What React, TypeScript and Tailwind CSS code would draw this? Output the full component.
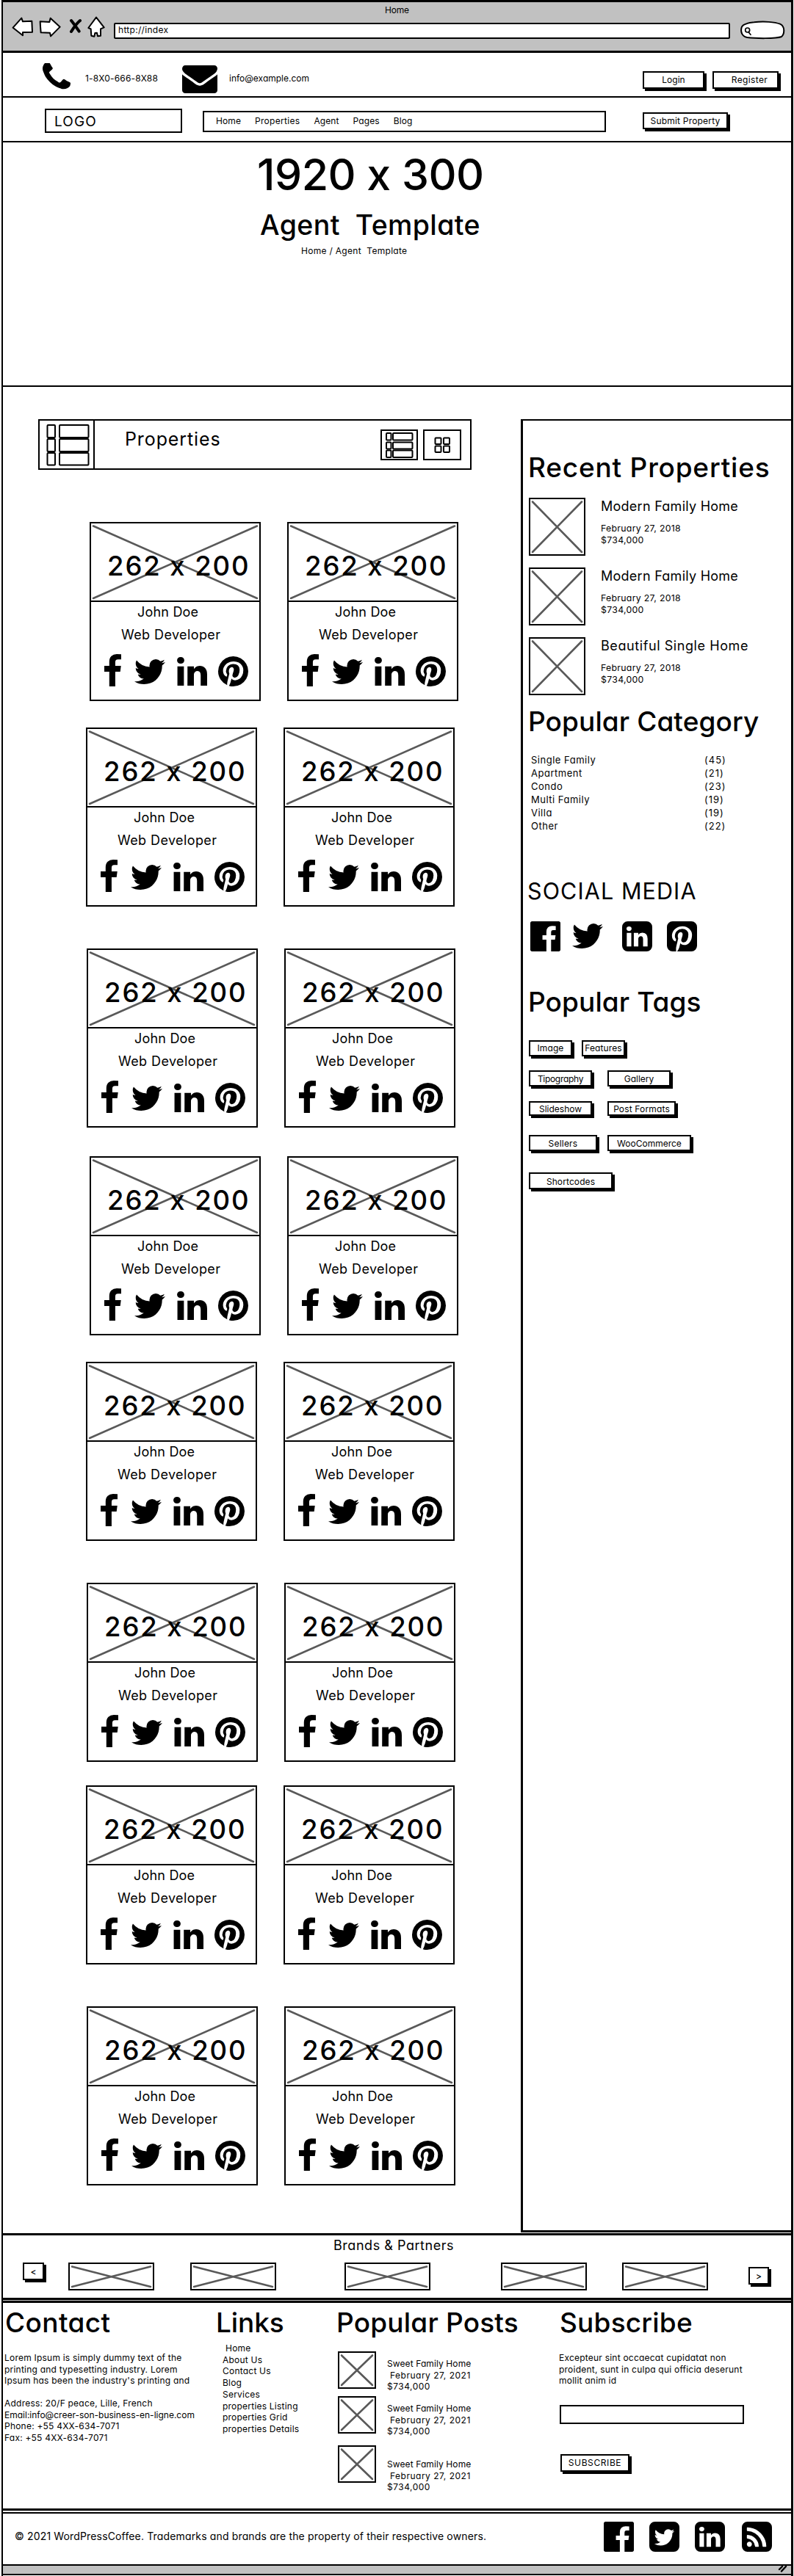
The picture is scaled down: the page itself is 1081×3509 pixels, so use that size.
import type { ReactNode } from "react";

/* ---------- icon outlines (1792-unit grid) ---------- */

const ICONS = {
  facebook: {
    box: "479 0 864 1664",
    d: "M1343 12v264h-157q-86 0-116 36t-30 108v189h293l-39 296h-254v759h-306v-759h-255v-296h255v-218q0-186 104-288.5t277-102.5q147 0 228 12z",
  },
  twitter: {
    box: "108 256 1576 1280",
    d: "M1684 408q-67 98-162 167 1 14 1 42 0 130-38 259.5t-115.5 248.5-184.5 210.5-258 146-323 54.5q-271 0-496-145 35 4 78 4 225 0 401-138-105-2-188-64.5t-114-159.5q33 5 61 5 43 0 85-11-112-23-185.5-111.5t-73.5-205.5v-4q68 38 146 41-66-44-105-115t-39-154q0-88 44-163 121 149 294.5 238.5t371.5 99.5q-8-38-8-74 0-134 94.5-228.5t228.5-94.5q140 0 236 102 109-21 205-78-37 115-142 178 93-10 186-50z",
  },
  linkedin: {
    box: "126 148 1538 1468",
    d: "M477 625v991h-330v-991h330zm21-306q1 73-50.5 122t-135.5 49h-2q-82 0-132-49t-50-122q0-74 51.5-122.5t134.5-48.5 133 48.5 51 122.5zm1166 729v568h-329v-530q0-105-40.5-164.5t-126.5-59.5q-63 0-105.5 34.5t-63.5 85.5q-11 30-11 81v553h-329q2-399 2-647t-1-296l-1-48h329v144h-2q20-32 41-56t56.5-52 87-43.5 114.5-15.5q171 0 275 113.5t104 332.5z",
  },
  pinterest: {
    box: "128 128 1536 1536",
    d: "M1664 896q0 209-103 385.5t-279.5 279.5-385.5 103q-111 0-218-32 59-93 78-164 9-34 54-211 20 39 73 67.5t114 28.5q121 0 216-68.5t147-188.5 52-270q0-114-59.5-214t-172.5-163-255-63q-105 0-196 29t-154.5 77-109 110.5-67 129.5-21.5 134q0 104 40 183t117 111q30 12 38-20 2-7 8-31t8-30q6-23-11-43-51-61-51-151 0-151 104.5-259.5t273.5-108.5q151 0 235.5 82t84.5 213q0 170-68.5 289t-175.5 119q-61 0-98-43.5t-23-104.5q8-35 26.5-93.5t30-103 11.5-75.5q0-50-27-83t-77-33q-62 0-105 57t-43 142q0 73 25 122l-99 418q-17 70-13 177-206-91-333-281t-127-423q0-209 103-385.5t279.5-279.5 385.5-103 385.5 103 279.5 279.5 103 385.5z",
  },
  facebookBox: {
    box: "128 128 1536 1536",
    d: "M1579 128q35 0 60 25t25 60v1366q0 35-25 60t-60 25h-391v-595h199l30-232h-229v-148q0-56 23.5-84t91.5-28l122-1v-207q-63-9-178-9-136 0-217.5 80t-81.5 226v171h-200v232h200v595h-735q-35 0-60-25t-25-60v-1366q0-35 25-60t60-25h1366z",
  },
  twitterBox: {
    box: "128 128 1536 1536",
    d: "M1408 610q-56 25-121 34 68-40 93-117-65 38-134 51-61-66-153-66-87 0-148.5 61.5t-61.5 148.5q0 29 5 48-129-7-242-65t-192-155q-29 50-29 106 0 114 91 175-47-1-100-26v2q0 75 50 133.5t123 72.5q-29 8-51 8-13 0-39-4 21 63 74.5 104t121.5 42q-116 90-261 90-26 0-50-3 148 94 322 94 112 0 210-35.5t168-95 120.5-137 75-162 24.5-168.5q0-18-1-27 63-45 105-109zm256-194v960q0 119-84.5 203.5t-203.5 84.5h-960q-119 0-203.5-84.5t-84.5-203.5v-960q0-119 84.5-203.5t203.5-84.5h960q119 0 203.5 84.5t84.5 203.5z",
  },
  linkedinBox: {
    box: "128 128 1536 1536",
    d: "M365 1414h231v-694h-231v694zm246-908q-1-52-36-86t-93-34-94.5 34-36.5 86q0 51 35.5 85.5t92.5 34.5h1q59 0 95-34.5t36-85.5zm585 908h231v-398q0-154-73-233t-193-79q-136 0-209 117h2v-101h-231q3 66 0 694h231v-388q0-38 7-56 15-35 45-59.5t74-24.5q116 0 116 157v371zm468-998v960q0 119-84.5 203.5t-203.5 84.5h-960q-119 0-203.5-84.5t-84.5-203.5v-960q0-119 84.5-203.5t203.5-84.5h960q119 0 203.5 84.5t84.5 203.5z",
  },
  pinterestBox: {
    box: "128 128 1536 1536",
    d: "M1376 128q119 0 203.5 84.5t84.5 203.5v960q0 119-84.5 203.5t-203.5 84.5h-725q85-122 108-210 9-34 53-209 21 39 73.5 67t112.5 28q181 0 295.5-147.5t114.5-373.5q0-84-35-162.5t-96.5-139-152.5-97-197-36.5q-104 0-194.5 28.5t-153 76.5-107.5 109.5-66.5 128-21.5 132.5q0 102 39.5 180t116.5 110q13 5 23.5 0t14.5-19q10-44 15-61 6-23-11-42-50-62-50-150 0-150 103.5-256.5t270.5-106.5q149 0 232.5 81t83.5 210q0 168-67.5 286t-173.5 118q-60 0-97-43.5t-23-103.5q8-34 26.5-92.5t29.5-102 11-74.5q0-49-26.5-81.5t-75.5-32.5q-61 0-103.5 56.5t-42.5 139.5q0 72 24 121l-98 414q-24 100-7 254h-183q-119 0-203.5-84.5t-84.5-203.5v-960q0-119 84.5-203.5t203.5-84.5h960z",
  },
  rssBox: {
    box: "128 128 1536 1536",
    d: "M640 1280q0-53-37.5-90.5t-90.5-37.5-90.5 37.5-37.5 90.5 37.5 90.5 90.5 37.5 90.5-37.5 37.5-90.5zm351 94q-13-232-177-396t-396-177q-14-1-24 9t-10 23v128q0 13 8.5 22t21.5 10q154 11 264 121t121 264q1 13 10 21.5t22 8.5h128q13 0 23-10t9-24zm384 1q-5-154-56-297.5t-139.5-260-205-205-260-139.5-297.5-56q-14-1-23 9-10 10-10 23v128q0 13 9 22t22 10q204 7 378 111.5t278.5 278.5 111.5 378q1 13 10 22t22 9h128q13 0 23-10 11-9 9-23zm289-959v960q0 119-84.5 203.5t-203.5 84.5h-960q-119 0-203.5-84.5t-84.5-203.5v-960q0-119 84.5-203.5t203.5-84.5h960q119 0 203.5 84.5t84.5 203.5z",
  },
  phone: {
    box: "192 192 1408 1408",
    d: "M1600 1240q0 27-10 70.5t-21 68.5q-21 50-122 106-94 51-186 51-27 0-53-3.5t-57.5-12.5-47-14.5-55.5-20.5-49-18q-98-35-175-83-127-79-264-216t-216-264q-48-77-83-175-3-9-18-49t-20.5-55.5-14.5-47-12.5-57.5-3.5-53q0-92 51-186 56-101 106-122 25-11 68.5-21t70.5-10q14 0 21 3 18 6 53 76 11 19 30 54t35 63.5 31 53.5q3 4 17.5 25t21.5 35.5 7 28.5q0 20-28.5 50t-62 55-62 53-28.5 46q0 9 5 22.5t8.5 20.5 14 24 11.5 19q76 137 174 235t235 174q2 1 19 11.5t24 14 20.5 8.5 22.5 5q18 0 46-28.5t53-62 55-62 50-28.5q14 0 28.5 7t35.5 21.5 25 17.5q25 15 53.5 31t63.5 35 54 30q70 35 76 53 3 7 3 21z",
  },
  envelope: {
    box: "0 256 1792 1408",
    d: "M1792 710v794q0 66-47 113t-113 47h-1472q-66 0-113-47t-47-113v-794q44 49 101 87 362 246 497 345 57 42 92.5 65.5t94.5 48 110 24.5h2q51 0 110-24.5t94.5-48 92.5-65.5q170-123 498-345 57-39 100-87zm0-294q0 79-49 151t-122 123q-376 261-468 325-10 7-42.5 31t-54 38.5-52 32.5-57.5 27-50 9h-2q-23 0-50-9t-57.5-27-52-32.5-54-38.5-42.5-31q-91-64-262-182.5t-205-142.5q-62-42-117-115.5t-55-136.5q0-78 41.5-130t118.5-52h1472q65 0 112.5 47t47.5 113z",
  },
};

function Icon({ name, className }: { name: keyof typeof ICONS; className: string }) {
  return (
    <svg viewBox={ICONS[name].box} preserveAspectRatio="none" className={`shrink-0 fill-black ${className}`}>
      <path d={ICONS[name].d} />
    </svg>
  );
}

/* ---------- shared pieces ---------- */

function CrossLines({ w, h }: { w: number; h: number }) {
  return (
    <svg viewBox={`0 0 ${w} ${h}`} preserveAspectRatio="none" className="absolute inset-0 h-full w-full">
      <path
        d={`M3 3.5L${w - 3} ${h - 3}M3 ${h - 3}L${w - 3} 3.5`}
        stroke="#595959"
        strokeWidth="2.6"
        strokeLinecap="round"
        fill="none"
      />
    </svg>
  );
}

function Placeholder({ w, h, className }: { w: number; h: number; className: string }) {
  return (
    <div className={`relative shrink-0 border-2 border-black bg-white ${className}`}>
      <CrossLines w={w} h={h} />
    </div>
  );
}

function Button({ children, className }: { children: ReactNode; className: string }) {
  return (
    <button
      className={`shrink-0 whitespace-nowrap border-2 border-black bg-white text-center text-[12px] shadow-[3px_3px_0_#000] ${className}`}
    >
      {children}
    </button>
  );
}

function Heading({ children, className }: { children: ReactNode; className: string }) {
  return <h2 className={`whitespace-nowrap text-[37px] font-medium leading-[46px] ${className}`}>{children}</h2>;
}

/* ---------- header ---------- */

function BrowserChrome() {
  return (
    <header className="h-[72px] border-y-[3px] border-black bg-[#c1c1c1]">
      <div className="h-[19px] text-center text-[12px] leading-[21px] tracking-[-0.2px]">Home</div>
      <div className="flex items-start">
        <svg viewBox="48 66 87 87" className="ml-[12px] h-[29px] w-[29px] shrink-0">
          <path d="M53 113L88 74L93 88L130 86L132 131L93 132L93 145Z" fill="#fff" stroke="#000" strokeWidth="6" strokeLinejoin="round" />
        </svg>
        <svg viewBox="159 66 90 87" className="ml-[8px] h-[29px] w-[30px] shrink-0">
          <path d="M164 88L202 90L206 74L245 110L207 148L204 134L167 133L165 108Z" fill="#fff" stroke="#000" strokeWidth="6" strokeLinejoin="round" />
        </svg>
        <svg viewBox="282 66 51 87" className="ml-[11px] h-[29px] w-[17px] shrink-0">
          <path d="M291 84Q304 100 323 128M327 84Q310 98 291 129" fill="none" stroke="#000" strokeWidth="12" strokeLinecap="round" />
        </svg>
        <svg viewBox="357 66 72 87" className="ml-[8px] h-[29px] w-[24px] shrink-0">
          <path d="M393 71L425 112L411 118L411 146L399 148L396 134L388 135L385 149L373 146L371 118L361 114Z" fill="#fff" stroke="#000" strokeWidth="6" strokeLinejoin="round" />
        </svg>
        <div className="ml-[12px] mt-[9px] h-[22px] w-[839px] shrink-0 rounded-[2px] border-2 border-black bg-white pl-[4px] text-[12px] leading-[16px] tracking-[0.3px]">
          http://index
        </div>
        <svg viewBox="438 78 192 87" className="ml-[12px] mt-[4px] h-[29px] w-[64px] shrink-0">
          <path
            d="M449 112C453 98 475 93 500 91C540 86 585 90 606 98C628 108 624 140 612 150C590 159 500 157 472 153C450 149 444 130 449 112Z"
            fill="#fff"
            stroke="#000"
            strokeWidth="6"
          />
          <circle cx="473" cy="123" r="9" fill="none" stroke="#000" strokeWidth="5" />
          <path d="M478 132L486 142" stroke="#000" strokeWidth="5" strokeLinecap="round" />
        </svg>
      </div>
    </header>
  );
}

function ContactBar() {
  return (
    <div className="flex h-[61px] items-start border-b-2 border-black">
      <Icon name="phone" className="ml-[54px] mt-[14px] h-[37px] w-[38px]" />
      <span className="ml-[20px] mt-[26px] w-[131px] text-[12px] leading-[17px] tracking-[0.2px]">1-8X0-666-8X88</span>
      <Icon name="envelope" className="ml-[1px] mt-[17px] h-[38px] w-[48px]" />
      <span className="ml-[16px] mt-[26px] w-[563px] text-[12px] leading-[17px]">info@example.com</span>
      <Button className="mt-[25px] h-[24px] w-[84px] leading-[20px]">Login</Button>
      <Button className="ml-[11px] mt-[25px] h-[24px] w-[90px] pl-[11px] leading-[20px] tracking-[0.35px]">Register</Button>
    </div>
  );
}

function NavBar() {
  return (
    <div className="flex h-[61px] items-start border-b-2 border-black">
      <div className="ml-[57px] mt-[15px] h-[33px] w-[187px] shrink-0 border-2 border-black pl-[11px] text-[19px] leading-[31px] tracking-[1.1px]">
        LOGO
      </div>
      <nav className="ml-[28px] mt-[18px] flex h-[29px] w-[549px] shrink-0 gap-[19px] border-2 border-black pl-[16px] text-[12px] leading-[24px] tracking-[0.1px]">
        <a>Home</a>
        <a className="tracking-[0.3px]">Properties</a>
        <a>Agent</a>
        <a>Pages</a>
        <a>Blog</a>
      </nav>
      <Button className="ml-[50px] mt-[20px] h-[23px] w-[116px] leading-[19px] tracking-[0.2px]">Submit Property</Button>
    </div>
  );
}

function Hero() {
  return (
    <section className="h-[333px] whitespace-pre border-b-2 border-black pt-[14px]">
      <div className="ml-[346px] text-[59px] font-medium leading-[60px] tracking-[-0.5px]">1920 x 300</div>
      <h1 className="ml-[350px] mt-[16px] text-[37.5px] font-medium leading-[46px] tracking-[0.4px]">{"Agent  Template"}</h1>
      <p className="ml-[406px] mt-[3px] text-[12px] leading-[18px] tracking-[0.3px]">{"Home / Agent  Template"}</p>
    </section>
  );
}

/* ---------- agents ---------- */

function SketchRects({ rects }: { rects: number[][] }) {
  return (
    <>
      {rects.map(([x, y, w, h], i) => (
        <rect key={i} x={x} y={y} width={w} height={h} rx="1" fill="#fff" stroke="#000" strokeWidth="2" />
      ))}
    </>
  );
}

function PropertiesBar() {
  return (
    <div className="ml-[48px] mt-[44px] flex h-[69px] w-[590px] items-start border-2 border-black">
      <div className="h-full w-[75px] border-r-2 border-black pl-[8px] pt-[4px]">
        <svg viewBox="0 0 60 58" className="h-[58px] w-[60px]">
          <SketchRects
            rects={[
              [2.5, 2, 10.5, 17],
              [2.5, 21, 10.5, 17],
              [2.5, 40, 10.5, 16.5],
              [19, 2, 39.5, 17],
              [19, 21, 39.5, 17],
              [19, 40, 39.5, 16.5],
            ]}
          />
        </svg>
      </div>
      <h2 className="ml-[41px] text-[25px] leading-[50px] tracking-[0.9px]">Properties</h2>
      <div className="ml-auto mr-[12px] mt-[12px] flex gap-[7px]">
        <div className="h-[42px] w-[51px] border-2 border-black">
          <svg viewBox="0 0 47 38" className="h-[38px] w-[47px]">
            <SketchRects
              rects={[
                [6, 3, 6.5, 9.5],
                [6, 15.5, 6.5, 9],
                [6, 26.5, 6.5, 9.5],
                [15, 3, 26.5, 9.5],
                [15, 15.5, 26.5, 9],
                [15, 26.5, 26.5, 9.5],
              ]}
            />
          </svg>
        </div>
        <div className="h-[42px] w-[52px] border-2 border-black">
          <svg viewBox="0 0 48 38" className="h-[38px] w-[48px]">
            <SketchRects
              rects={[
                [14.5, 9.5, 8, 8.5],
                [26, 9.5, 8, 8.5],
                [14.5, 20.5, 8, 8.5],
                [26, 20.5, 8, 8.5],
              ]}
            />
          </svg>
        </div>
      </div>
    </div>
  );
}

function AgentCard() {
  return (
    <article className="h-[244px] w-[233px] shrink-0 border-2 border-black">
      <div className="relative h-[107px] border-b-2 border-black">
        <CrossLines w={229} h={105} />
        <span className="relative block whitespace-nowrap pl-[22px] text-[36.5px] font-medium leading-[116px] tracking-[1.9px]">262 x 200</span>
      </div>
      <h3 className="pl-[63px] text-[18px] leading-[27px] tracking-[0.2px]">John Doe</h3>
      <p className="pl-[41px] text-[18px] leading-[35px] tracking-[0.4px]">Web Developer</p>
      <div className="mt-[9px] flex items-start">
        <Icon name="facebook" className="ml-[18px] h-[44px] w-[23px]" />
        <Icon name="twitter" className="ml-[18px] mt-[6.5px] h-[34px] w-[42px]" />
        <Icon name="linkedin" className="ml-[16px] mt-[4px] h-[39px] w-[41px]" />
        <Icon name="pinterest" className="ml-[15px] mt-[3px] h-[41px] w-[41px]" />
      </div>
    </article>
  );
}

const AGENT_ROWS = [
  "mt-[71px] ml-[118px]",
  "mt-[36px] ml-[113px]",
  "mt-[57px] ml-[114px]",
  "mt-[39px] ml-[118px]",
  "mt-[36px] ml-[113px]",
  "mt-[57px] ml-[114px]",
  "mt-[32px] ml-[113px]",
  "mt-[57px] ml-[114px]",
];

/* ---------- sidebar ---------- */

const RECENT = [
  ["Modern Family Home", "tracking-[0.26px]"],
  ["Modern Family Home", "tracking-[0.26px]"],
  ["Beautiful Single Home", "tracking-[0.58px]"],
];

const CATEGORIES = [
  ["Single Family", "(45)"],
  ["Apartment", "(21)"],
  ["Condo", "(23)"],
  ["Multi Family", "(19)"],
  ["Villa", "(19)"],
  ["Other", "(22)"],
];

function Sidebar() {
  return (
    <aside className="mt-[44px] h-[2470px] w-[368px] shrink-0 border-b-[3px] border-l-[3px] border-t-2 border-black">
      <Heading className="ml-[7px] mt-[41px] tracking-[0.8px]">Recent Properties</Heading>
      <div className="ml-[8px] mt-[18px] flex flex-col gap-[16px]">
        {RECENT.map(([title, spacing], i) => (
          <div key={i} className="flex h-[79px]">
            <Placeholder w={73} h={75} className="h-[79px] w-[77px]" />
            <div className="ml-[21px] whitespace-nowrap">
              <h3 className={`text-[18px] leading-[23px] ${spacing}`}>{title}</h3>
              <p className="mt-[11px] text-[12.3px] leading-[16px] tracking-[0.3px]">
                February 27, 2018
                <br />
                $734,000
              </p>
            </div>
          </div>
        ))}
      </div>
      <Heading className="ml-[7px] mt-[13px] tracking-[0.1px]">Popular Category</Heading>
      <ul className="ml-[11px] mt-[20px] text-[13px] leading-[18px] tracking-[0.5px]">
        {CATEGORIES.map(([name, count]) => (
          <li key={name} className="flex">
            <span className="w-[236px]">{name}</span>
            <span className="tracking-[1px]">{count}</span>
          </li>
        ))}
      </ul>
      <h2 className="ml-[6px] mt-[59px] text-[30.5px] leading-[41px] tracking-[1.1px]">SOCIAL MEDIA</h2>
      <div className="mt-[21px] flex items-start">
        <Icon name="facebookBox" className="ml-[10px] h-[41px] w-[41px]" />
        <Icon name="twitter" className="ml-[16px] mt-[3px] h-[34px] w-[42px]" />
        <Icon name="linkedinBox" className="ml-[26px] h-[41px] w-[41px]" />
        <Icon name="pinterestBox" className="ml-[20px] h-[41px] w-[41px]" />
      </div>
      <Heading className="ml-[7px] mt-[46px] tracking-[0.1px]">Popular Tags</Heading>
      <div className="ml-[8px] mt-[29px] flex gap-[13px]">
        <Button className="h-[22px] w-[59px] leading-[18px] tracking-[0.1px]">Image</Button>
        <Button className="h-[22px] w-[59px] leading-[18px] tracking-[0.1px]">Features</Button>
      </div>
      <div className="ml-[8px] mt-[19px] flex gap-[21px]">
        <Button className="h-[22px] w-[86px] leading-[20px] tracking-[-0.3px]">Tipography</Button>
        <Button className="h-[22px] w-[86px] leading-[20px]">Gallery</Button>
      </div>
      <div className="ml-[8px] mt-[20px] flex gap-[21px]">
        <Button className="h-[20px] w-[86px] leading-[17px]">Slideshow</Button>
        <Button className="h-[20px] w-[93px] leading-[17px] tracking-[0.15px]">Post Formats</Button>
      </div>
      <div className="ml-[8px] mt-[26px] flex gap-[14px]">
        <Button className="h-[22px] w-[93px] leading-[20px] tracking-[0.2px]">Sellers</Button>
        <Button className="h-[22px] w-[114px] leading-[20px]">WooCommerce</Button>
      </div>
      <div className="ml-[8px] mt-[29px] flex">
        <Button className="h-[23px] w-[114px] leading-[21px] tracking-[0.1px]">Shortcodes</Button>
      </div>
    </aside>
  );
}

/* ---------- bottom sections ---------- */

function Brands() {
  return (
    <section className="h-[85px]">
      <h2 className="ml-[450px] text-[18px] leading-[27px] tracking-[0.54px]">Brands &amp; Partners</h2>
      <div className="mt-[10px] flex items-start">
        <Button className="ml-[27px] h-[24px] w-[29px] font-medium leading-[21px]">&lt;</Button>
        <Placeholder w={113} h={34} className="ml-[33px] h-[38px] w-[117px]" />
        <Placeholder w={113} h={34} className="ml-[49px] h-[38px] w-[117px]" />
        <Placeholder w={113} h={34} className="ml-[93px] h-[38px] w-[117px]" />
        <Placeholder w={113} h={34} className="ml-[96px] h-[38px] w-[117px]" />
        <Placeholder w={113} h={34} className="ml-[48px] h-[38px] w-[117px]" />
        <Button className="ml-[55px] mt-[6px] h-[24px] w-[28px] font-medium leading-[21px]">&gt;</Button>
      </div>
    </section>
  );
}

const LINKS = ["About Us", "Contact Us", "Blog", "Services", "properties Listing", "properties Grid", "properties Details"];

const POSTS = [
  ["", "mt-[9px]"],
  ["mt-[10px]", "mt-[9px]"],
  ["mt-[16px]", "mt-[18px]"],
];

function Footer() {
  return (
    <footer className="flex h-[280px] items-start whitespace-nowrap pl-[2px] pt-[4px] text-[12px] leading-[15.55px] tracking-[0.22px]">
      <div className="w-[287px] shrink-0">
        <Heading className="ml-[1px] tracking-[0.4px]">Contact</Heading>
        <p className="mt-[17px]">
          Lorem Ipsum is simply dummy text of the
          <br />
          printing and typesetting industry. Lorem
          <br />
          Ipsum has been the industry's printing and
        </p>
        <p className="mt-[15.5px]">
          Address: 20/F peace, Lille, French
          <br />
          <span className="tracking-[0px]">Email:info@creer-son-business-en-ligne.com</span>
          <br />
          Phone: +55 4XX-634-7071
          <br />
          Fax: +55 4XX-634-7071
        </p>
      </div>
      <div className="w-[164px] shrink-0">
        <Heading className="ml-[1px] tracking-[-0.1px]">Links</Heading>
        <ul className="ml-[10px] mt-[4px] leading-[15.7px]">
          <li className="pl-[4px]">Home</li>
          {LINKS.map((l) => (
            <li key={l}>{l}</li>
          ))}
        </ul>
      </div>
      <div className="w-[304px] shrink-0">
        <Heading className="ml-[1px] tracking-[0.2px]">Popular Posts</Heading>
        <div className="ml-[3px] mt-[16px]">
          {POSTS.map(([gap, textGap], i) => (
            <div key={i} className={`flex h-[51px] items-start ${gap}`}>
              <Placeholder w={48} h={47} className="h-[51px] w-[52px]" />
              <div className={`ml-[15px] ${textGap}`}>
                <p className="tracking-[0.1px]">Sweet Family Home</p>
                <p className="pl-[4px] tracking-[0.5px]">February 27, 2021</p>
                <p className="tracking-[0.5px]">$734,000</p>
              </div>
            </div>
          ))}
        </div>
      </div>
      <div className="shrink-0">
        <Heading className="ml-[1px] tracking-[0.2px]">Subscribe</Heading>
        <p className="mt-[17px]">
          Excepteur sint occaecat cupidatat non
          <br />
          proident, sunt in culpa qui officia deserunt
          <br />
          mollit anim id
        </p>
        <div className="ml-[1px] mt-[25px] h-[26px] w-[251px] border-[2.5px] border-black" />
        <Button className="ml-[2px] mt-[41px] h-[24px] w-[94px] leading-[20px] tracking-[0.6px]">SUBSCRIBE</Button>
      </div>
    </footer>
  );
}

function Copyright() {
  return (
    <div className="flex h-[69px] items-start">
      <p className="ml-[16px] mt-[20px] w-[802px] shrink-0 whitespace-nowrap text-[14px] leading-[22px] tracking-[0.15px]">
        © 2021 WordPressCoffee. Trademarks and brands are the property of their respective owners.
      </p>
      <Icon name="facebookBox" className="mt-[11px] h-[41px] w-[41px]" />
      <Icon name="twitterBox" className="ml-[21px] mt-[11px] h-[41px] w-[41px]" />
      <Icon name="linkedinBox" className="ml-[21px] mt-[11px] h-[41px] w-[41px]" />
      <Icon name="rssBox" className="ml-[23px] mt-[11px] h-[41px] w-[41px]" />
    </div>
  );
}

export default function App() {
  return (
    <div className="h-[3509px] w-[1081px] overflow-hidden bg-white pl-[2px] font-['Inter',sans-serif] text-black [font-feature-settings:'cv11','calt'_0]">
      <div className="flex h-full w-[1078px] flex-col border-l-2 border-r-[3px] border-black">
        <BrowserChrome />
        <ContactBar />
        <NavBar />
        <Hero />
        <main className="flex h-[2518px] border-b-[3px] border-black">
          <div className="w-[705px] shrink-0">
            <PropertiesBar />
            {AGENT_ROWS.map((row, i) => (
              <div key={i} className={`flex gap-[36px] ${row}`}>
                <AgentCard />
                <AgentCard />
              </div>
            ))}
          </div>
          <Sidebar />
        </main>
        <Brands />
        <div className="h-[7px] border-y-[3px] border-black bg-[#c1c1c1]" />
        <Footer />
        <div className="h-[7px] border-b-2 border-t-[3px] border-black" />
        <Copyright />
        <div className="flex h-[15px] items-start justify-end border-y-2 border-black bg-[#c1c1c1] pr-[4px]">
          <svg viewBox="0 0 14 9" className="h-[9px] w-[14px]">
            <path d="M2 5L6 1M5 7.5L11 1" stroke="#000" strokeWidth="2.4" strokeLinecap="round" />
          </svg>
        </div>
      </div>
    </div>
  );
}
